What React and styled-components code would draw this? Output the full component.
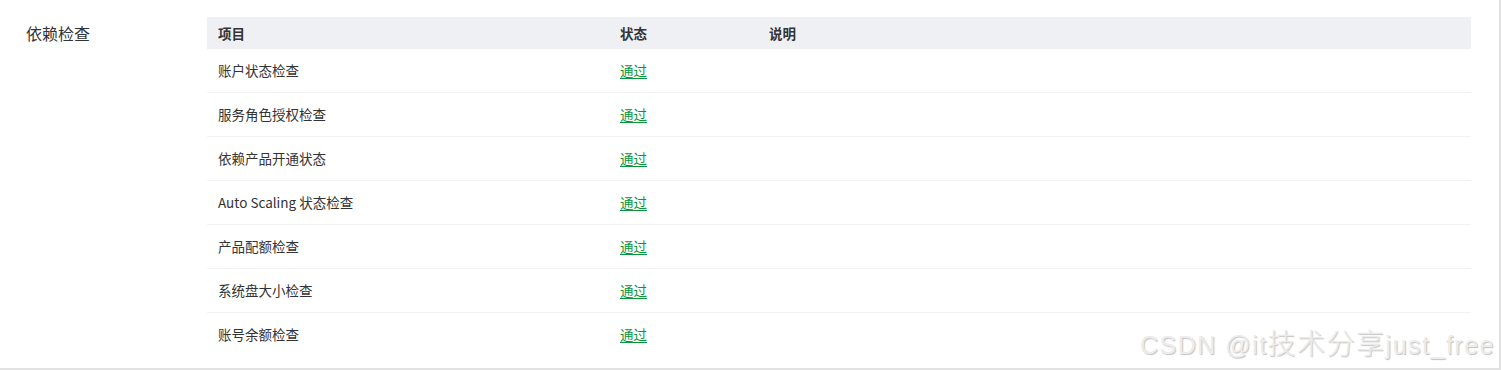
import styled, { createGlobalStyle } from 'styled-components';

const GlobalStyle = createGlobalStyle`
  body {
    margin: 0;
    background: #fff;
    font-family: "Noto Sans CJK SC", "Noto Sans", sans-serif;
  }
`;

const Panel = styled.div`
  position: relative;
  box-sizing: border-box;
  width: 1501px;
  height: 370px;
  padding-top: 17px;
  border-right: 2px solid #e2e2e2;
  border-bottom: 2px solid #e2e2e2;
  display: flex;
  overflow: hidden;
`;

const Label = styled.div`
  width: 181px;
  padding-left: 26px;
  font-size: 16px;
  line-height: 32px;
  color: #333;
`;

const Table = styled.div`
  width: 1264px;
  display: flex;
  flex-direction: column;
`;

const Row = styled.div`
  display: grid;
  grid-template-columns: 402px 149px 1fr;
  align-items: center;
  height: ${p => (p.$head ? '32px' : '44px')};
  box-sizing: border-box;
  background: ${p => (p.$head ? '#eff0f3' : '#fff')};
  border-bottom: ${p => (p.$head || p.$last ? 'none' : '1px solid #f2f2f2')};
`;

const Cell = styled.div`
  padding: 0 0 ${p => (p.$head ? '0' : '2px')} 11px;
  font-size: 13.5px;
  line-height: 18px;
  color: #333;
  font-weight: ${p => (p.$head ? 700 : 400)};
  white-space: nowrap;
`;

const Pass = styled.a`
  font-size: 13.5px;
  color: #0a963c;
  text-decoration: underline;
  text-underline-offset: 2px;
  cursor: pointer;
`;

const Watermark = styled.div`
  position: absolute;
  right: 4px;
  bottom: 8px;
  font-family: "Liberation Sans", "Noto Sans CJK SC", sans-serif;
  font-size: 25px;
  line-height: 30px;
  color: #ececec;
  text-shadow: 1px 1px 1px #c2c2c2;
  letter-spacing: 1.5px;
`;

const WideCjk = styled.span`
  font-size: 28px;
  font-weight: 300;
`;

const items = [
  '账户状态检查',
  '服务角色授权检查',
  '依赖产品开通状态',
  'Auto Scaling 状态检查',
  '产品配额检查',
  '系统盘大小检查',
  '账号余额检查',
];

export default function App() {
  return (
    <>
      <GlobalStyle />
      <Panel>
        <Label>依赖检查</Label>
        <Table>
          <Row $head>
            <Cell $head>项目</Cell>
            <Cell $head>状态</Cell>
            <Cell $head>说明</Cell>
          </Row>
          {items.map((name, i) => (
            <Row key={name} $last={i === items.length - 1}>
              <Cell>{name}</Cell>
              <Cell>
                <Pass>通过</Pass>
              </Cell>
              <Cell />
            </Row>
          ))}
        </Table>
        <Watermark>
          CSDN @it<WideCjk>技术分享</WideCjk>just_free
        </Watermark>
      </Panel>
    </>
  );
}
